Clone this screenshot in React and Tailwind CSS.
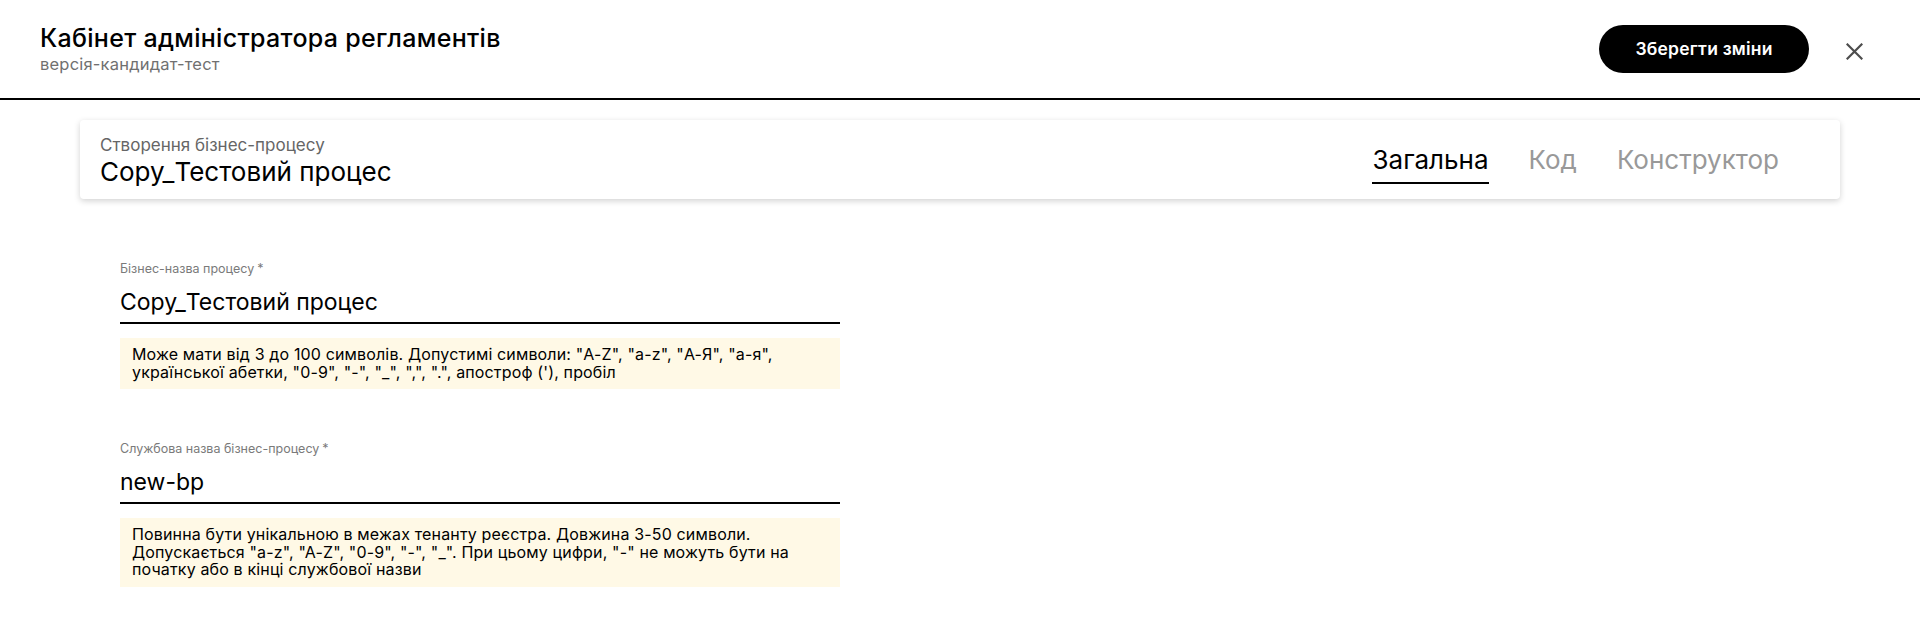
import { useState } from "react";

const tabs = ["Загальна", "Код", "Конструктор"];

function CloseIcon() {
  return (
    <svg width="17" height="17" viewBox="0 0 17 17" fill="none" stroke="#4d4d4d" strokeWidth="2.2" strokeLinecap="square">
      <path d="M1.5 1.5L15.5 15.5M15.5 1.5L1.5 15.5" />
    </svg>
  );
}

function Field({ label, value, hint, className = "" }) {
  return (
    <div className={className}>
      <div className="text-[12.5px] leading-4 text-[#7a7a7a]">
        {label}
        <span className="ml-[3px]">*</span>
      </div>
      <div className="mt-[11px] pb-[6px] border-b-2 border-black text-[23px] leading-7 text-black">
        {value}
      </div>
      <div className="mt-[14px] bg-[#fff9e6] px-3 py-2 text-[16px] leading-[17.5px] tracking-[0.15px] text-black">
        {hint}
      </div>
    </div>
  );
}

export default function App() {
  const [active, setActive] = useState("Загальна");

  return (
    <div className="min-h-[617px] bg-white font-['Inter',sans-serif]">
      <header className="h-[100px] border-b-2 border-black flex items-center justify-between pl-10 pr-[57px]">
        <div>
          <h1 className="text-[25px] leading-7 tracking-[0.3px] font-medium text-black">Кабінет адміністратора регламентів</h1>
          <p className="mt-[2px] text-[16.5px] leading-5 tracking-[0.2px] text-[#707070]">версія-кандидат-тест</p>
        </div>
        <div className="flex items-center">
          <button
            type="button"
            className="w-[210px] h-12 rounded-full bg-black text-white text-[17.5px] tracking-[0.2px] font-semibold flex items-center justify-center"
          >
            Зберегти зміни
          </button>
          <button type="button" className="ml-[37px] mt-[5px]" aria-label="Закрити">
            <CloseIcon />
          </button>
        </div>
      </header>

      <div className="px-20 pt-5">
        <div className="h-[79px] rounded bg-white shadow-[0_2px_6px_rgba(0,0,0,0.18)] flex justify-between pl-5 pr-[61px]">
          <div className="pt-[15px]">
            <div className="text-[17px] leading-5 text-[#666]">Створення бізнес-процесу</div>
            <div className="mt-[3px] text-[26px] leading-7 text-black">Copy_Тестовий процес</div>
          </div>
          <div className="flex items-end gap-10 pb-[15px]">
            {tabs.map((t) => {
              const on = t === active;
              return (
                <button
                  key={t}
                  type="button"
                  onClick={() => setActive(t)}
                  className={[
                    "pb-2 border-b-2 text-[26px] leading-7",
                    on ? "border-black text-black" : "border-transparent text-[#999]",
                  ].join(" ")}
                >
                  {t}
                </button>
              );
            })}
          </div>
        </div>

        <div className="w-[720px] ml-10 pt-[62px]">
          <Field
            label="Бізнес-назва процесу"
            value="Copy_Тестовий процес"
            hint={'Може мати від 3 до 100 символів. Допустимі символи: "A-Z", "a-z", "А-Я", "а-я", української абетки, "0-9", "-", "_", ",", ".", апостроф (\'), пробіл'}
          />
          <Field
            className="mt-[52px]"
            label="Службова назва бізнес-процесу"
            value="new-bp"
            hint={'Повинна бути унікальною в межах тенанту реєстра. Довжина 3-50 символи. Допускається "a-z", "A-Z", "0-9", "-", "_". При цьому цифри, "-" не можуть бути на початку або в кінці службової назви'}
          />
        </div>
      </div>
    </div>
  );
}
